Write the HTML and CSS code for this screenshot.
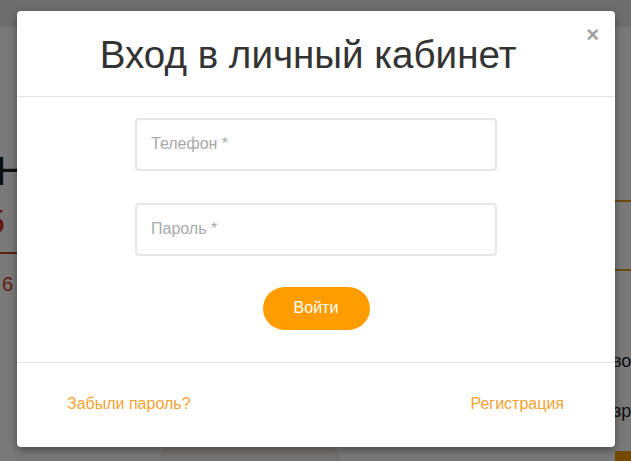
FILE: index.html
```html
<!DOCTYPE html>
<html lang="ru">
<head>
<meta charset="utf-8">
<title>Вход в личный кабинет</title>
<link rel="stylesheet" href="styles.css">
</head>
<body>
<div class="page">
  <div class="topbar"></div>
  <div class="content">
    <div class="col-left">
      <div class="big">Н</div>
      <div class="price">5</div>
      <div class="red-line"></div>
      <div class="small-red">6</div>
    </div>
    <div class="col-mid">
      <div class="card-stub"></div>
    </div>
    <div class="col-right">
      <div class="or-line first"></div>
      <div class="or-line second"></div>
      <div class="side-text t1">во</div>
      <div class="side-text t2">зра</div>
      <div class="or-blob"></div>
    </div>
  </div>
</div>
<div class="overlay">
  <div class="modal">
    <div class="modal-header">
      <h1 class="modal-title">Вход в личный кабинет</h1>
      <button class="close" type="button">×</button>
    </div>
    <form class="modal-body">
      <input class="field" type="text" placeholder="Телефон *">
      <input class="field" type="password" placeholder="Пароль *">
      <button class="submit" type="button">Войти</button>
    </form>
    <div class="modal-footer">
      <a class="link" href="#">Забыли пароль?</a>
      <a class="link" href="#">Регистрация</a>
    </div>
  </div>
</div>
</body>
</html>
```
FILE: styles.css
```css
* { box-sizing: border-box; }
html, body { margin: 0; padding: 0; }
body {
  width: 631px;
  height: 461px;
  overflow: hidden;
  font-family: "Liberation Sans", Arial, sans-serif;
  background: #fff;
  position: relative;
}
.page {
  width: 631px;
  height: 461px;
  display: flex;
  flex-direction: column;
}
.topbar {
  height: 27px;
  background: #e6e6e6;
}
.content {
  flex: 1;
  display: flex;
  background: #fcfcfc;
}
.col-left {
  width: 17px;
  overflow: hidden;
  padding-top: 122px;
}
.big {
  font-size: 40px;
  line-height: 44px;
  color: #222;
  margin-left: -4px;
}
.price {
  font-size: 34px;
  line-height: 40px;
  color: #d42a1c;
  margin-left: -14px;
  margin-top: 8px;
}
.red-line {
  height: 2px;
  background: #c8401e;
  margin-top: 11px;
}
.small-red {
  font-size: 20px;
  line-height: 24px;
  color: #c8401e;
  margin-top: 18px;
  margin-left: 2px;
}
.col-mid {
  flex: 1;
  display: flex;
  align-items: flex-end;
  padding-left: 143px;
}
.card-stub {
  width: 180px;
  height: 14px;
  background: #f2f0ee;
  border-radius: 10px 10px 0 0;
}
.col-right {
  width: 16px;
  overflow: hidden;
  padding-top: 173px;
  position: relative;
}
.or-line {
  height: 2px;
  background: #e49a20;
}
.or-line.second { margin-top: 67px; }
.side-text {
  font-size: 18px;
  line-height: 20px;
  color: #222;
  white-space: nowrap;
}
.t1 { margin-top: 80px; margin-left: -3px; }
.t2 { margin-top: 30px; margin-left: -2px; }
.or-blob {
  position: absolute;
  left: -45px;
  bottom: -20px;
  width: 90px;
  height: 30px;
  border-radius: 15px;
  background: #f39a00;
}
.overlay {
  position: absolute;
  inset: 0;
  background: rgba(0, 0, 0, 0.52);
  padding: 11px 16px 0 17px;
}
.modal {
  width: 598px;
  background: #fff;
  border-radius: 4px;
  box-shadow: 0 3px 9px rgba(0, 0, 0, 0.4);
  display: flex;
  flex-direction: column;
}
.modal-header {
  position: relative;
  height: 86px;
  border-bottom: 1px solid #e5e5e5;
  display: flex;
  align-items: center;
  justify-content: center;
  padding-right: 16px;
}
.modal-title {
  margin: 0;
  font-weight: normal;
  font-size: 38.6px;
  line-height: 44px;
  color: #333;
  padding-top: 2px;
}
.close {
  position: absolute;
  right: 16px;
  top: 13px;
  border: 0;
  background: none;
  padding: 0;
  font-family: "Liberation Sans", Arial, sans-serif;
  font-size: 22px;
  font-weight: bold;
  line-height: 22px;
  color: #a0a0a0;
}
.modal-body {
  margin: 0;
  padding: 21px 0 32px;
  display: flex;
  flex-direction: column;
  align-items: center;
  gap: 32px;
  border-bottom: 1px solid #e5e5e5;
}
.field {
  width: 362px;
  height: 53px;
  border: 2px solid #e6e6e6;
  border-radius: 4px;
  padding: 0 14px 2px;
  font-family: "Liberation Sans", Arial, sans-serif;
  font-size: 16px;
  color: #555;
  outline: none;
}
.field::placeholder { color: #a9a9a9; }
.submit {
  margin-top: -1px;
  width: 107px;
  height: 43px;
  border: 0;
  border-radius: 22px;
  background: #ff9c00;
  color: #fff;
  font-family: "Liberation Sans", Arial, sans-serif;
  font-size: 16px;
  padding-bottom: 2px;
}
.modal-footer {
  height: 84px;
  display: flex;
  align-items: center;
  justify-content: space-between;
  padding: 0 51px 2px 50px;
}
.link {
  color: #f3a333;
  text-decoration: none;
  font-size: 16px;
}
```
